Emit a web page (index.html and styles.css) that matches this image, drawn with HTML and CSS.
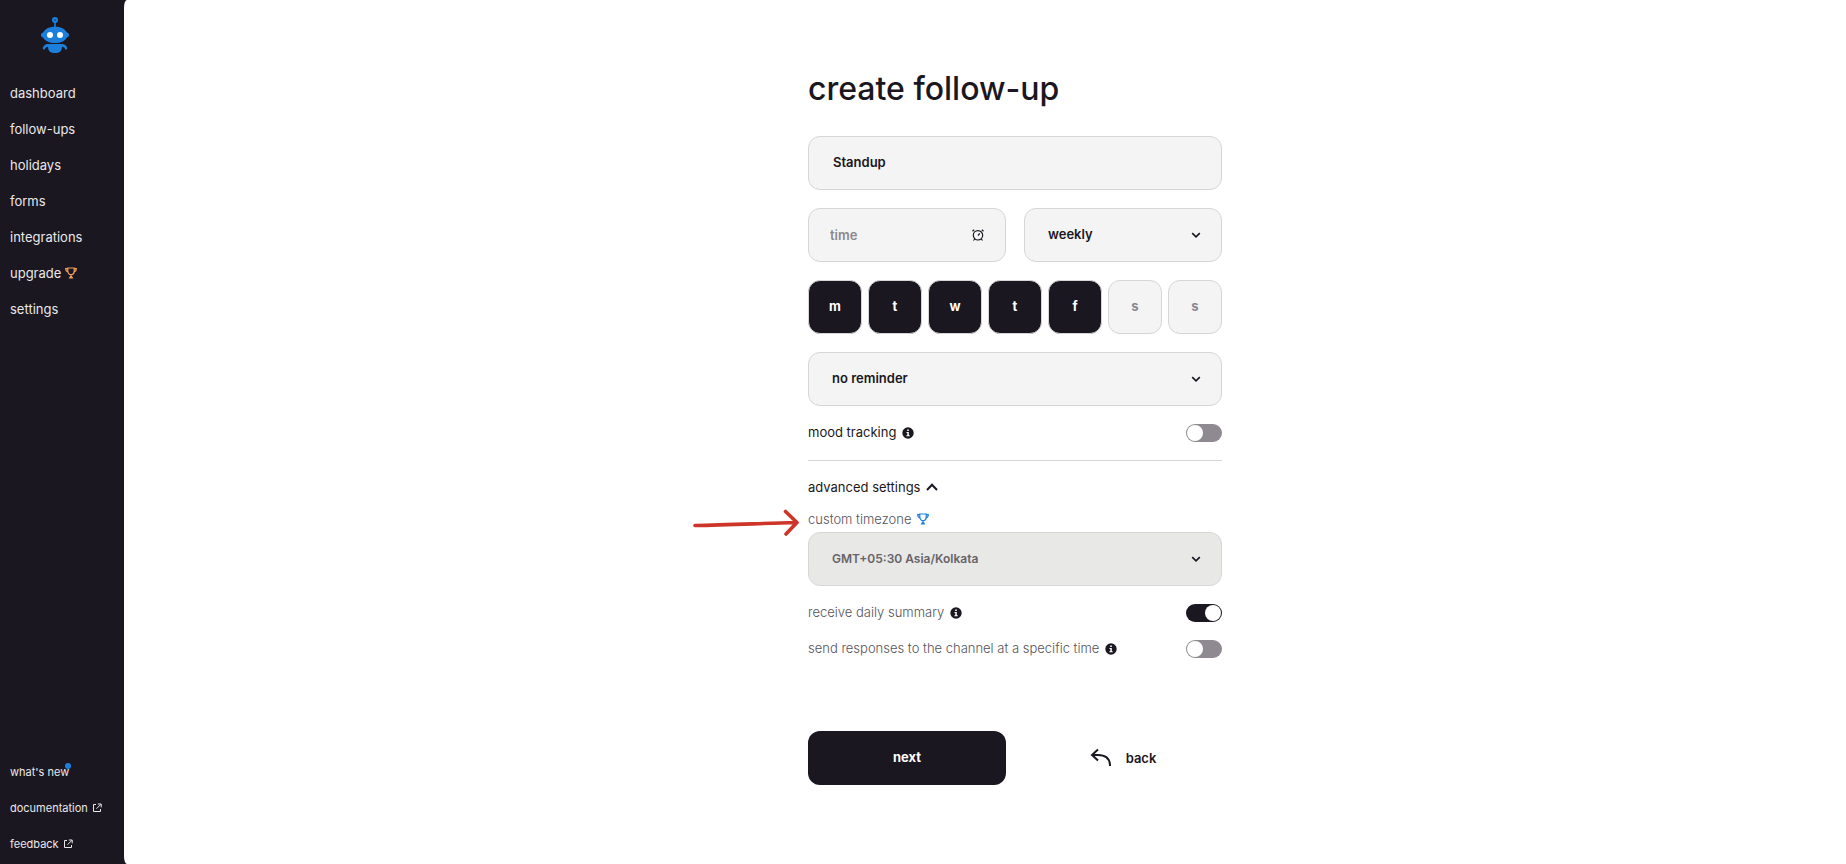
FILE: index.html
```html
<!DOCTYPE html>
<html lang="en">
<head>
<meta charset="utf-8">
<title>create follow-up</title>
<link rel="stylesheet" href="styles.css">
</head>
<body>
<svg class="defs" aria-hidden="true">
  <symbol id="trophy" viewBox="0 0 12 12"><path d="M2.800 1h6.400v3c0 2-1.300 3.700-3.200 3.700S2.800 6 2.800 4zM2.800 1.600H.7C.7 3.600 1.600 4.800 3.200 5M9.200 1.600h2.100C11.300 3.600 10.400 4.800 8.800 5M6 7.700v2" fill="none" stroke="currentColor" stroke-width="1.200"/><path d="M5 9h2l1.300 2.500H3.700z" fill="currentColor"/></symbol>
  <symbol id="external" viewBox="0 0 10 10"><path d="M4 1.500H1.500v7h7V6M5.800 1h3.400v3.400M9 1.200 4.500 5.700" fill="none" stroke="currentColor"/></symbol>
  <symbol id="info" viewBox="0 0 12 12"><circle cx="6" cy="6" r="5.700" fill="currentColor"/><path d="M5.200 2.500h1.600v1.500H5.200zM4.500 5h2.300v3.200h.9v1.100H4.400V8.200h.9V6.100h-.8z" fill="#fff"/></symbol>
  <symbol id="chevron" viewBox="0 0 10 10"><path d="M1.200 3.200 5 6.800l3.800-3.600" fill="none" stroke="currentColor" stroke-width="1.700"/></symbol>
</svg>
<div class="app">
  <aside class="sidebar">
    <svg class="logo" viewBox="0 0 28 36" aria-hidden="true">
      <g fill="#1c7fdc"><circle cx="14" cy="3" r="3"/><path d="M13.200 5h1.600v5h-1.600zM6 11.500C10 9 18 9 22 11.500c2 1.200 3 2.500 4 4 1.500.5 2 1.400 2 2.500s-.5 2-2 2.500C24 24 20 26 14 26S4 24 2 20.500C.5 20 0 19.100 0 18s.5-2 2-2.500c1-1.500 2-2.800 4-4z"/><path d="M6 27h16c2.500.6 4.300 2.300 4.300 5l-2 .8c-.2-1.500-1-2.600-3.300-3 0 2.200-.8 4-2.200 5.200-3 1.400-6.600 1.400-9.600 0C7.800 33.800 7 32 7 29.800c-2.300.4-3.100 1.500-3.300 3l-2-.8c0-2.700 1.800-4.400 4.300-5z"/></g>
      <circle cx="14" cy="3" r="1" fill="#14508c"/>
      <circle cx="9" cy="18" r="3" fill="#fff"/><circle cx="19" cy="18" r="3" fill="#fff"/>
    </svg>
    <nav class="nav">
      <a href="#">dashboard</a>
      <a href="#">follow-ups</a>
      <a href="#">holidays</a>
      <a href="#">forms</a>
      <a href="#">integrations</a>
      <a href="#">upgrade <svg class="icon gold"><use href="#trophy"/></svg></a>
      <a href="#">settings</a>
    </nav>
    <nav class="nav nav-foot">
      <a href="#"><span class="news">what's new</span></a>
      <a href="#">documentation <svg class="icon small"><use href="#external"/></svg></a>
      <a href="#">feedback <svg class="icon small"><use href="#external"/></svg></a>
    </nav>
  </aside>
  <main class="main">
    <form class="form">
      <h1>create follow-up</h1>
      <input class="field" type="text" value="Standup" aria-label="name">
      <div class="pair">
        <label class="field time"><input type="text" placeholder="time" aria-label="time">
          <svg class="clock" viewBox="0 0 12 12"><g fill="none" stroke="currentColor" stroke-width="1.200"><circle cx="6" cy="6.300" r="4.700"/><path d="M6 6.500 7.800 4.300M.5 2.300 2.200.7M11.500 2.300 9.800.7M2.700 10 1.500 11.500M9.300 10l1.200 1.500"/></g></svg>
        </label>
        <div class="select"><select class="field" aria-label="frequency"><option>weekly</option></select><svg class="chev"><use href="#chevron"/></svg></div>
      </div>
      <div class="days">
        <button type="button" class="day on">m</button>
        <button type="button" class="day on">t</button>
        <button type="button" class="day on">w</button>
        <button type="button" class="day on">t</button>
        <button type="button" class="day on">f</button>
        <button type="button" class="day">s</button>
        <button type="button" class="day">s</button>
      </div>
      <div class="select"><select class="field" aria-label="reminder"><option>no reminder</option></select><svg class="chev"><use href="#chevron"/></svg></div>
      <div class="row"><label for="mood">mood tracking</label><svg class="icon"><use href="#info"/></svg><input class="toggle" id="mood" type="checkbox"></div>
      <hr>
      <button type="button" class="advanced">advanced settings <svg class="icon" viewBox="0 0 12 12"><path d="M1 9l5-5.300L11 9" fill="none" stroke="currentColor" stroke-width="2"/></svg></button>
      <div class="zone">
        <div class="zone-label">
          <label for="tz">custom timezone</label><svg class="icon blue"><use href="#trophy"/></svg>
          <svg class="arrow" viewBox="0 0 106 28" aria-hidden="true"><path d="M2 16.500C35 16 65 14.500 102 13.500M92.500 2.500 104 13.500 93 25" fill="none" stroke="#cd3529" stroke-width="3.600" stroke-linecap="round" stroke-linejoin="round"/></svg>
        </div>
        <div class="select"><select class="field" id="tz" disabled><option>GMT+05:30 Asia/Kolkata</option></select><svg class="chev"><use href="#chevron"/></svg></div>
      </div>
      <div class="row light"><label for="daily">receive daily summary</label><svg class="icon"><use href="#info"/></svg><input class="toggle" id="daily" type="checkbox" checked></div>
      <div class="row light"><label for="send">send responses to the channel at a specific time</label><svg class="icon"><use href="#info"/></svg><input class="toggle" id="send" type="checkbox"></div>
      <div class="pair actions">
        <button type="submit" class="next">next</button>
        <button type="button" class="back"><svg viewBox="0 0 22 20" aria-hidden="true"><path d="M8 1.500 2 7l6 5.500M2 7h6c7 0 12 3 12 11" fill="none" stroke="currentColor" stroke-width="2"/></svg>back</button>
      </div>
    </form>
  </main>
</div>
</body>
</html>
```
FILE: styles.css
```css
* { box-sizing: border-box; }
body, button, input, select { font-family: Inter, "Liberation Sans", sans-serif; font-size: 13px; color: #1b1720; }
body { margin: 0; background: #1b1720; }
.defs { display: none; }
.app { display: flex; min-height: 100vh; }
.sidebar { width: 124px; flex: none; display: flex; flex-direction: column; padding: 17px 10px 2px; }
.logo { width: 28px; height: 36px; margin-left: 31px; margin-bottom: 22px; }
.nav { display: flex; flex-direction: column; }
.nav a { display: flex; align-items: center; gap: 4px; height: 36px; color: #e9e8ea; text-decoration: none; white-space: nowrap; }
.nav-foot { margin-top: auto; font-size: 11px; }
.news { position: relative; }
.news::after { content: ""; position: absolute; right: -2px; top: -2px; width: 6px; height: 6px; border-radius: 50%; background: #1c7fdc; }
.icon { width: 12px; height: 12px; flex: none; }
.icon.small { width: 10px; height: 10px; }
.gold { color: #f0a058; }
.blue { color: #1c7fdc; }
.main { flex: 1; background: #fff; border-radius: 3px 0 0 3px / 8px; padding: 67px 0 79px 60px; }
.form { width: 414px; margin: 0 auto; display: flex; flex-direction: column; gap: 18px; }
h1 { margin: 0 0 7px; font-size: 32px; line-height: 44px; font-weight: 500; }
.field { width: 100%; height: 54px; margin: 0; border: 1px solid #d6d6d6; border-radius: 12px; background: #f4f4f4; padding: 0 24px 2px; font-weight: 600; outline: 0; }
.pair { display: grid; grid-template-columns: repeat(2, minmax(0, 1fr)); gap: 18px; }
.time { display: flex; align-items: center; padding: 0 21px; }
.time input { flex: 1; min-width: 0; border: 0; padding: 0; background: none; font-weight: 600; outline: 0; }
.time input::placeholder { color: #8b888f; }
.clock { width: 12px; height: 12px; }
.select { position: relative; }
select.field { appearance: none; display: block; padding: 0 23px 2px; opacity: 1; }
select.field:disabled { background: #e8e8e6; color: #66636a; font-size: 12px; }
.chev { position: absolute; right: 21px; top: 22px; width: 10px; height: 10px; pointer-events: none; }
.days { display: grid; grid-template-columns: repeat(7, 1fr); gap: 6px; }
.day { height: 54px; padding: 0 0 2px; border: 1px solid #d6d6d6; border-radius: 12px; background: #f4f4f4; color: #8b888f; font-weight: 700; }
.day.on { background: #1b1720; color: #fff; }
.row { display: flex; align-items: center; gap: 6px; height: 18px; }
.row label { padding-bottom: 2px; }
.light label, .zone-label label { font-weight: 300; color: #56535a; }
.toggle { appearance: none; width: 36px; height: 18px; margin: 0 0 0 auto; padding: 1px; border-radius: 9px; background: #8f8a91; display: flex; }
.toggle::before { content: ""; width: 16px; height: 16px; border-radius: 50%; background: #fff; }
.toggle:checked { background: #1b1720; justify-content: flex-end; }
hr { width: 100%; margin: 0; border: 0; border-top: 1px solid #d6d6d6; }
.advanced { display: flex; align-items: center; align-self: flex-start; gap: 6px; height: 15px; padding: 0; border: 0; background: none; }
.zone { display: flex; flex-direction: column; gap: 6px; }
.zone-label { position: relative; display: flex; align-items: center; gap: 6px; height: 14px; }
.arrow { position: absolute; right: calc(100% + 9px); top: -3px; width: 106px; height: 28px; }
.actions { margin-top: 55px; }
.next { height: 54px; padding: 0 0 2px; border: 0; border-radius: 12px; background: #1b1720; color: #fff; font-weight: 700; }
.back { display: flex; align-items: center; justify-content: center; gap: 14px; border: 0; background: none; font-weight: 600; }
.back svg { width: 22px; height: 20px; }
```
